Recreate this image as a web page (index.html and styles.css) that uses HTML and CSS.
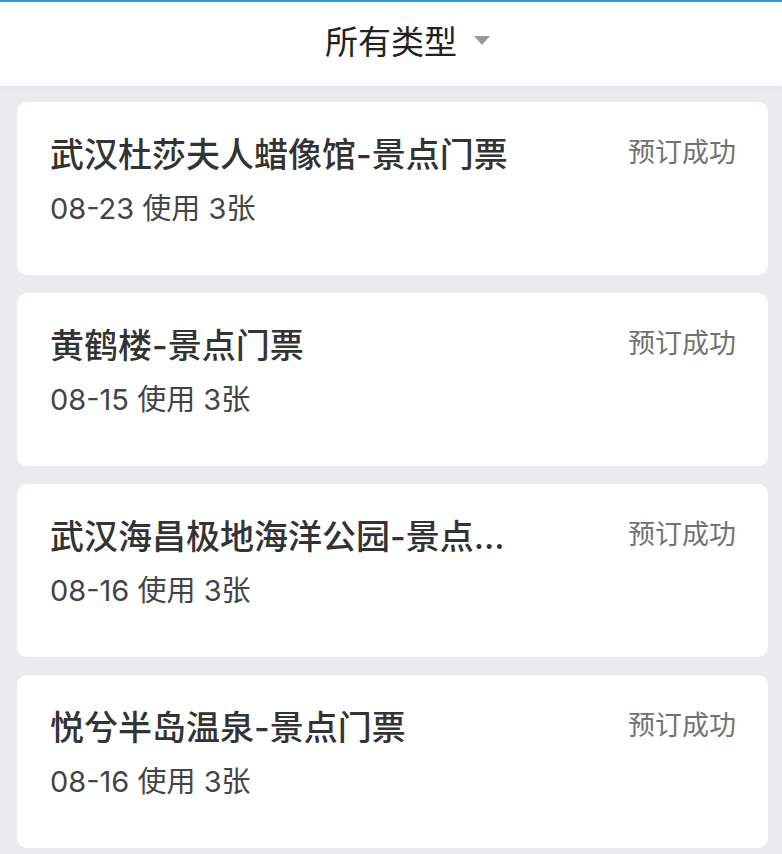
FILE: index.html
```html
<!DOCTYPE html>
<html lang="zh-CN">
<head>
<meta charset="utf-8">
<title>所有类型</title>
<link rel="stylesheet" href="styles.css">
</head>
<body>
<header class="topbar">
  <div class="filter">
    <span class="filter-label">所有类型</span>
    <span class="filter-caret"></span>
  </div>
</header>
<main class="list">
  <article class="card">
    <div class="card-row">
      <h2 class="card-title">武汉杜莎夫人蜡像馆-景点门票</h2>
      <span class="card-status">预订成功</span>
    </div>
    <p class="card-meta">08-23 使用 3张</p>
  </article>
  <article class="card">
    <div class="card-row">
      <h2 class="card-title">黄鹤楼-景点门票</h2>
      <span class="card-status">预订成功</span>
    </div>
    <p class="card-meta">08-15 使用 3张</p>
  </article>
  <article class="card">
    <div class="card-row">
      <h2 class="card-title">武汉海昌极地海洋公园-景点...</h2>
      <span class="card-status">预订成功</span>
    </div>
    <p class="card-meta">08-16 使用 3张</p>
  </article>
  <article class="card">
    <div class="card-row">
      <h2 class="card-title">悦兮半岛温泉-景点门票</h2>
      <span class="card-status">预订成功</span>
    </div>
    <p class="card-meta">08-16 使用 3张</p>
  </article>
</main>
</body>
</html>
```

FILE: styles.css
```css
html, body {
  margin: 0;
  padding: 0;
}
body {
  background: #ebebef;
  font-family: "Inter", "Noto Sans CJK SC", "Noto Sans", sans-serif;
  color: #333;
}
.topbar {
  height: 84px;
  background: #fff;
  border-top: 2px solid #2a9de0;
  display: flex;
  justify-content: center;
  align-items: center;
  box-shadow: 0 2px 6px rgba(0, 0, 0, 0.04);
}
.filter {
  position: relative;
  line-height: 48px;
  margin-top: 2px;
}
.filter-label {
  font-size: 33px;
  color: #222;
}
.filter-caret {
  position: absolute;
  left: calc(100% + 17px);
  top: 18px;
  width: 0;
  height: 0;
  border-left: 8px solid transparent;
  border-right: 8px solid transparent;
  border-top: 9px solid #999;
}
.list {
  display: flex;
  flex-direction: column;
  gap: 18px;
  padding: 16px 14px 0 17px;
}
.card {
  background: #fff;
  border-radius: 10px;
  height: 173px;
  box-sizing: border-box;
  padding: 28px 32px 0 33px;
}
.card-row {
  display: flex;
  justify-content: space-between;
  align-items: flex-start;
}
.card-title {
  margin: 0;
  max-width: 470px;
  font-size: 34px;
  line-height: 50px;
  font-weight: 500;
  color: #333;
  white-space: nowrap;
}
.card-status {
  font-size: 27px;
  line-height: 40px;
  color: #727272;
  margin-top: 3px;
}
.card-meta {
  margin: 9px 0 0;
  font-size: 29px;
  line-height: 40px;
  color: #444;
}
```
